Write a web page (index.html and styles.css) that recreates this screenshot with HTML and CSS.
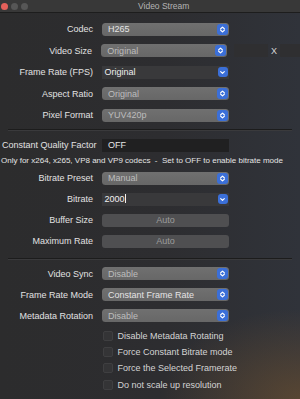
FILE: index.html
```html
<!DOCTYPE html>
<html lang="en">
<head>
  <meta charset="UTF-8">
  <title>Video Stream</title>
  <link rel="stylesheet" href="styles.css">
</head>
<body>

<div class="window">
  <div class="titlebar">
    <div class="lights">
      <span class="light red"></span>
      <span class="light"></span>
      <span class="light"></span>
    </div>
    <div class="title">Video Stream</div>
  </div>

  <div class="content">
    <div class="row">
      <label>Codec</label>
      <div class="popup bright"><span>H265</span><i class="btn"><svg viewBox="0 0 10 10"><path d="M3 4.2L5 2.4L7 4.2M3 5.8L5 7.6L7 5.8"/></svg></i></div>
    </div>
    <div class="row">
      <label>Video Size</label>
      <div class="popup"><span>Original</span><i class="btn"><svg viewBox="0 0 10 10"><path d="M3 4.2L5 2.4L7 4.2M3 5.8L5 7.6L7 5.8"/></svg></i></div>
      <div class="size-fields">
        <span class="size-box"></span>
        <span class="size-x">X</span>
        <span class="size-box wide"></span>
      </div>
    </div>
    <div class="row">
      <label>Frame Rate (FPS)</label>
      <div class="combo"><span>Original</span><i class="btn small"><svg viewBox="0 0 10 10"><path d="M3 4L5 6L7 4"/></svg></i></div>
    </div>
    <div class="row">
      <label>Aspect Ratio</label>
      <div class="popup"><span>Original</span><i class="btn"><svg viewBox="0 0 10 10"><path d="M3 4.2L5 2.4L7 4.2M3 5.8L5 7.6L7 5.8"/></svg></i></div>
    </div>
    <div class="row">
      <label>Pixel Format</label>
      <div class="popup"><span>YUV420p</span><i class="btn"><svg viewBox="0 0 10 10"><path d="M3 4.2L5 2.4L7 4.2M3 5.8L5 7.6L7 5.8"/></svg></i></div>
    </div>

    <div class="sep first"></div>

    <div class="row cqf">
      <label>Constant Quality Factor</label>
      <div class="field"><span>OFF</span></div>
    </div>
    <div class="note">Only for x264, x265, VP8 and VP9 codecs &nbsp;- &nbsp;Set to OFF to enable bitrate mode</div>
    <div class="row tight">
      <label>Bitrate Preset</label>
      <div class="popup"><span>Manual</span><i class="btn"><svg viewBox="0 0 10 10"><path d="M3 4.2L5 2.4L7 4.2M3 5.8L5 7.6L7 5.8"/></svg></i></div>
    </div>
    <div class="row tight">
      <label>Bitrate</label>
      <div class="combo"><span>2000<b class="caret"></b></span><i class="btn small"><svg viewBox="0 0 10 10"><path d="M3 4L5 6L7 4"/></svg></i></div>
    </div>
    <div class="row tight">
      <label>Buffer Size</label>
      <div class="auto">Auto</div>
    </div>
    <div class="row tight">
      <label>Maximum Rate</label>
      <div class="auto">Auto</div>
    </div>

    <div class="sep second"></div>

    <div class="row tight">
      <label>Video Sync</label>
      <div class="popup"><span>Disable</span><i class="btn"><svg viewBox="0 0 10 10"><path d="M3 4.2L5 2.4L7 4.2M3 5.8L5 7.6L7 5.8"/></svg></i></div>
    </div>
    <div class="row tight">
      <label>Frame Rate Mode</label>
      <div class="popup bright"><span>Constant Frame Rate</span><i class="btn"><svg viewBox="0 0 10 10"><path d="M3 4.2L5 2.4L7 4.2M3 5.8L5 7.6L7 5.8"/></svg></i></div>
    </div>
    <div class="row tight">
      <label>Metadata Rotation</label>
      <div class="popup"><span>Disable</span><i class="btn"><svg viewBox="0 0 10 10"><path d="M3 4.2L5 2.4L7 4.2M3 5.8L5 7.6L7 5.8"/></svg></i></div>
    </div>

    <div class="checks">
      <div class="check"><span class="box"></span>Disable Metadata Rotating</div>
      <div class="check"><span class="box"></span>Force Constant Bitrate mode</div>
      <div class="check"><span class="box"></span>Force the Selected Framerate</div>
      <div class="check"><span class="box"></span>Do not scale up resolution</div>
    </div>
  </div>
</div>

</body>
</html>
```

FILE: styles.css
```css
body {
  margin: 0;
  padding: 0;
  font-family: 'Liberation Sans', Arial, sans-serif;
  background: #2b2b2d;
  overflow: hidden;
}

.window {
  width: 300px;
  height: 399px;
  background:
    radial-gradient(ellipse 140px 90px at 300px 399px, rgba(120, 85, 45, 0.55), rgba(120, 85, 45, 0) 100%),
    linear-gradient(90deg, #2c2c2d 0%, #2d2d30 55%, #30333a 100%);
  color: #dedede;
}

/* title bar */
.titlebar {
  height: 12px;
  background: #383838;
  border-bottom: 1px solid #1d1d1d;
  display: flex;
  align-items: center;
  position: relative;
}

.lights {
  display: flex;
  gap: 3px;
  padding-left: 1px;
}

.light {
  width: 7px;
  height: 7px;
  border-radius: 50%;
  background: #565656;
}

.light.red {
  background: #e4605a;
}

.title {
  position: absolute;
  left: 138px;
  top: 0;
  line-height: 12px;
  font-size: 8.5px;
  color: #b4b4b4;
}

/* form */
.content {
  padding-top: 5.5px;
}

.row {
  height: 21.5px;
  display: flex;
  align-items: center;
}

.row.tight {
  height: 21px;
}

.row label {
  width: 93px;
  text-align: right;
  font-size: 9px;
  color: #e2e2e2;
  margin-right: 9px;
  white-space: nowrap;
}

.popup, .combo, .field, .auto {
  width: 127px;
  height: 13px;
  box-sizing: border-box;
  display: flex;
  align-items: center;
  font-size: 9px;
  position: relative;
}

.popup {
  background: linear-gradient(#707070, #676767);
  border-radius: 3.5px;
  color: #bdbdbd;
  padding-left: 6px;
}

.popup.bright {
  color: #e4e4e4;
}

.combo {
  background: #39393b;
  color: #f0f0f0;
  padding-left: 2.5px;
}

.btn {
  position: absolute;
  right: 1px;
  top: 1px;
  width: 11px;
  height: 11px;
  border-radius: 3px;
  background: #3b6fd8;
  display: flex;
  align-items: center;
  justify-content: center;
}

.btn.small {
  top: 1.5px;
  height: 10px;
  right: 1.5px;
  width: 10px;
}

.btn svg {
  width: 9px;
  height: 9px;
  fill: none;
  stroke: #fff;
  stroke-width: 1.3;
  stroke-linecap: round;
  stroke-linejoin: round;
}

.caret {
  display: inline-block;
  width: 1px;
  height: 9px;
  background: #f0f0f0;
  vertical-align: -1px;
  margin-left: 0.5px;
}

.size-fields {
  display: flex;
  align-items: center;
  margin-left: 7px;
  height: 13px;
}

.size-box {
  width: 34px;
  height: 13px;
  background: #2f2f31;
}

.size-box.wide {
  width: 20px;
}

.size-x {
  width: 12px;
  font-size: 9px;
  color: #d8d8d8;
  text-align: center;
}

.sep {
  height: 1px;
  background: #1c1c1c;
  margin-left: 8px;
  width: 284px;
  border-bottom: 1px solid #3a3a3c;
}

.sep.first {
  margin-top: 3px;
  margin-bottom: 3.5px;
}

.sep.second {
  margin-top: 6px;
  margin-bottom: 3.5px;
}

.row.cqf {
  height: 21px;
}

.row.cqf label {
  width: auto;
  text-align: left;
  margin-left: 2px;
  margin-right: 0;
  flex: 0 0 98px;
}

.row.cqf .field {
  margin-left: 2px;
}

.field {
  background: #202021;
  color: #e6e6e6;
  padding-left: 6px;
}

.note {
  height: 12px;
  line-height: 9px;
  font-size: 8px;
  color: #e4e4e4;
  padding-left: 1px;
  white-space: nowrap;
}

.auto {
  background: #4f4f51;
  border-radius: 3px;
  color: #9c9c9c;
  justify-content: center;
}

.checks {
  padding-top: 2px;
  padding-left: 103px;
}

.check {
  height: 16.2px;
  display: flex;
  align-items: center;
  font-size: 9px;
  color: #d4d4d4;
}

.box {
  width: 8px;
  height: 8px;
  border-radius: 2px;
  background: #343436;
  border: 0.5px solid #3f3f41;
  margin-right: 4.5px;
}
```
